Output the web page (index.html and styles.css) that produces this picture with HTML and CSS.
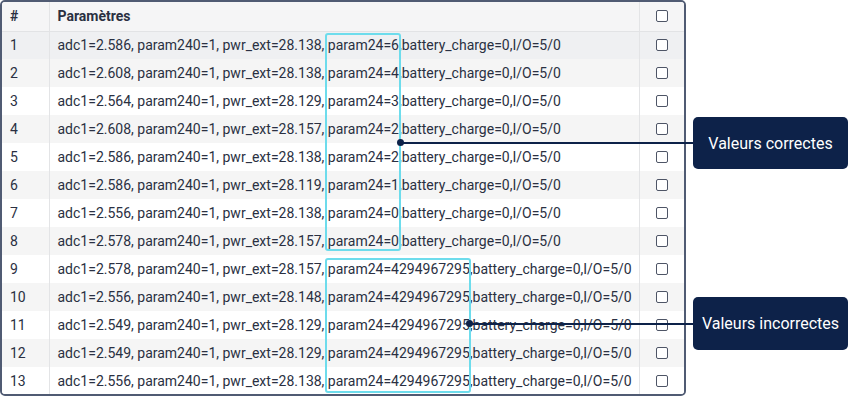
FILE: index.html
```html
<!DOCTYPE html>
<html lang="fr">
<head>
<meta charset="utf-8">
<link rel="stylesheet" href="styles.css">
</head>
<body>
<div class="wrap">
  <div class="frame">
    <table class="grid">
      <thead>
        <tr><th class="c-num">#</th><th class="c-par">Paramètres</th><th class="c-chk"><span class="cb"></span></th></tr>
      </thead>
      <tbody>
        <tr class="hl"><td class="c-num">1</td><td class="c-par">adc1=2.586, param240=1, pwr_ext=28.138, param24=6,battery_charge=0,I/O=5/0</td><td class="c-chk"><span class="cb"></span></td></tr>
        <tr><td class="c-num">2</td><td class="c-par">adc1=2.608, param240=1, pwr_ext=28.138, param24=4,battery_charge=0,I/O=5/0</td><td class="c-chk"><span class="cb"></span></td></tr>
        <tr><td class="c-num">3</td><td class="c-par">adc1=2.564, param240=1, pwr_ext=28.129, param24=3,battery_charge=0,I/O=5/0</td><td class="c-chk"><span class="cb"></span></td></tr>
        <tr><td class="c-num">4</td><td class="c-par">adc1=2.608, param240=1, pwr_ext=28.157, param24=2,battery_charge=0,I/O=5/0</td><td class="c-chk"><span class="cb"></span></td></tr>
        <tr><td class="c-num">5</td><td class="c-par">adc1=2.586, param240=1, pwr_ext=28.138, param24=2,battery_charge=0,I/O=5/0</td><td class="c-chk"><span class="cb"></span></td></tr>
        <tr><td class="c-num">6</td><td class="c-par">adc1=2.586, param240=1, pwr_ext=28.119, param24=1,battery_charge=0,I/O=5/0</td><td class="c-chk"><span class="cb"></span></td></tr>
        <tr><td class="c-num">7</td><td class="c-par">adc1=2.556, param240=1, pwr_ext=28.138, param24=0,battery_charge=0,I/O=5/0</td><td class="c-chk"><span class="cb"></span></td></tr>
        <tr><td class="c-num">8</td><td class="c-par">adc1=2.578, param240=1, pwr_ext=28.157, param24=0,battery_charge=0,I/O=5/0</td><td class="c-chk"><span class="cb"></span></td></tr>
        <tr><td class="c-num">9</td><td class="c-par">adc1=2.578, param240=1, pwr_ext=28.157, param24=4294967295,battery_charge=0,I/O=5/0</td><td class="c-chk"><span class="cb"></span></td></tr>
        <tr><td class="c-num">10</td><td class="c-par">adc1=2.556, param240=1, pwr_ext=28.148, param24=4294967295,battery_charge=0,I/O=5/0</td><td class="c-chk"><span class="cb"></span></td></tr>
        <tr><td class="c-num">11</td><td class="c-par">adc1=2.549, param240=1, pwr_ext=28.129, param24=4294967295,battery_charge=0,I/O=5/0</td><td class="c-chk"><span class="cb"></span></td></tr>
        <tr><td class="c-num">12</td><td class="c-par">adc1=2.549, param240=1, pwr_ext=28.129, param24=4294967295,battery_charge=0,I/O=5/0</td><td class="c-chk"><span class="cb"></span></td></tr>
        <tr><td class="c-num">13</td><td class="c-par">adc1=2.556, param240=1, pwr_ext=28.138, param24=4294967295,battery_charge=0,I/O=5/0</td><td class="c-chk"><span class="cb"></span></td></tr>
      </tbody>
    </table>
  </div>

  <div class="hbox hbox-ok"></div>
  <div class="hbox hbox-bad"></div>

  <div class="leader leader-ok"></div>
  <div class="dot dot-ok"></div>
  <div class="callout callout-ok">Valeurs correctes</div>

  <div class="leader leader-bad"></div>
  <div class="dot dot-bad"></div>
  <div class="callout callout-bad">Valeurs incorrectes</div>
</div>
</body>
</html>
```
FILE: styles.css
```css
* { box-sizing: border-box; }
html, body { margin: 0; padding: 0; background: #ffffff; }
body {
  font-family: Roboto, "Liberation Sans", Arial, sans-serif;
  color: #2a3042;
}
.wrap {
  position: relative;
  width: 851px;
  height: 397px;
}
.frame {
  width: 686px;
  height: 396px;
  border: 2px solid #505b73;
  border-radius: 5px;
  overflow: hidden;
  background: #fff;
}
.grid {
  width: 682px;
  border-collapse: collapse;
  table-layout: fixed;
  font-size: 14px;
}
.grid th, .grid td {
  padding: 0 0 0 8px;
  text-align: left;
  white-space: nowrap;
  overflow: visible;
  vertical-align: middle;
}
.grid thead tr { height: 29px; background: #f5f5f6; }
.grid thead th {
  font-weight: 700;
  border-bottom: 1px solid #e2e3e5;
  color: #2a3042;
}
.grid tbody tr { height: 28px; background: #ffffff; }
.grid tbody tr:nth-child(even) { background: #f5f5f5; }
.grid tbody tr.hl { background: #eff0f2; }
.c-num { width: 47px; border-right: 1px solid #e3e4e6; }
.c-par { width: 590px; border-right: 1px solid #e3e4e6; }
.c-chk { width: 45px; }
.grid .c-chk { padding: 0 0 0 16px; }
.cb {
  display: block;
  width: 12px;
  height: 12px;
  border: 1px solid #4e5566;
  border-radius: 2px;
  background: #fff;
}

.hbox {
  position: absolute;
  border: 2px solid #6ddcec;
  border-radius: 3px;
}
.hbox-ok { left: 325px; top: 33px; width: 76px; height: 218px; }
.hbox-bad { left: 325px; top: 258px; width: 146px; height: 135px; }

.leader {
  position: absolute;
  height: 2px;
  background: #0d2249;
}
.leader-ok { left: 401px; top: 142px; width: 292px; }
.leader-bad { left: 469px; top: 323px; width: 224px; }
.dot {
  position: absolute;
  width: 7px;
  height: 7px;
  border-radius: 50%;
  background: #0d2249;
}
.dot-ok { left: 397px; top: 139px; }
.dot-bad { left: 466px; top: 320px; }

.callout {
  position: absolute;
  left: 693px;
  width: 155px;
  height: 52px;
  border-radius: 5px;
  background: #0d2249;
  color: #ffffff;
  font-size: 16px;
  display: flex;
  align-items: center;
  justify-content: center;
}
.callout-ok { top: 117px; }
.callout-bad { top: 297px; height: 53px; }
```
